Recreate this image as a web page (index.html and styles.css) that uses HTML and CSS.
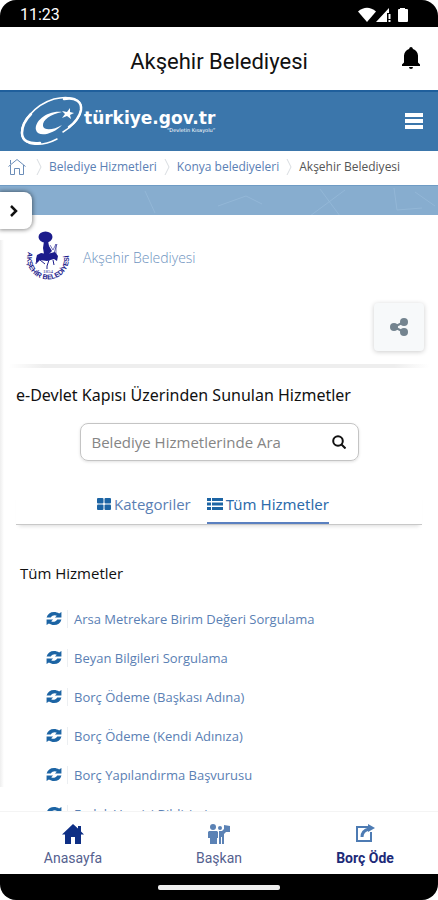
FILE: index.html
```html
<!DOCTYPE html>
<html lang="tr">
<head>
    <meta charset="UTF-8">
    <meta name="viewport" content="width=device-width, initial-scale=1.0">
    <title>Akşehir Belediyesi</title>
    <link rel="stylesheet" href="styles.css">
</head>
<body>
    <svg class="sprite" aria-hidden="true">
        <symbol id="sync" viewBox="0 0 16 14">
            <path d="M0 6C1 2 4 0 8 0c2 0 4 .6 5.500 1.600L16 0v6H9l2-2C9 2.800 6 3.500 4.500 6z"/>
            <path d="M16 8c-1 4-4 6-8 6-2 0-4-.6-5.500-1.600L0 14V8h7l-2 2c2 1.200 5 .5 6.500-2z"/>
        </symbol>
        <symbol id="sep" viewBox="0 0 6 18">
            <path d="M1 1l4 8-4 8" fill="none" stroke="#d9dde1"/>
        </symbol>
    </svg>

    <div class="phone">
        <div class="status">
            <span>11:23</span>
            <svg class="status-icons" width="52" height="16" viewBox="0 0 52 16">
                <path d="M0 4.500Q9-3 18 4.500L9 15z"/>
                <path d="M31 1v5h-2v9H18z"/>
                <path d="M30.500 7h2v5h-2zM30.500 13h2v2h-2z"/>
                <path d="M42 1h5v1h2q1 0 1 1v11q0 1-1 1h-8q-1 0-1-1V3q0-1 1-1h1z"/>
            </svg>
        </div>

        <header class="appbar">
            <h1>Akşehir Belediyesi</h1>
            <button class="bell" aria-label="Bildirimler">
                <svg width="18" height="22" viewBox="0 0 18 22">
                    <path d="M9 0q1.500 0 2 2 4.500 1.500 5 6.500v7l2 2V19H0v-1.500l2-2v-7Q2.500 3.500 7 2 7.500 0 9 0zM7 20h4q0 2-2 2t-2-2z"/>
                </svg>
            </button>
        </header>

        <main class="page">
            <div class="gov">
                <a class="gov-logo" href="#">
                    <svg width="64" height="50" viewBox="0 0 64 50">
                        <g fill="none" stroke="#fff" stroke-linecap="round">
                            <path d="M37 43C22 51 5 50 2 40C-1 28 14 9 34 3C50-1 63 3 61 14C60 22 52 31 43 36" stroke-width="1.500"/>
                            <path d="M20 47C9 48 2 45 2 37C2 30 6 23 11 18" stroke-width="2.500"/>
                            <path d="M44 3C56 1 62 6 61 14C60 20 55 27 49 31" stroke-width="2.500"/>
                        </g>
                        <path d="M42 16C28 14 14 25 16 34C18 42 34 38 42 29C34 34 24 35 23 30C22 24 31 18 42 16z" fill="#fff"/>
                        <path d="M50 12l0 4 4 1-4 2 1 4-4-3-5 2 3-4-3-3 5 1z" fill="#fff"/>
                    </svg>
                    <span class="gov-name">
                        <b>türkiye.gov.tr</b>
                        <small>“Devletin Kısayolu”</small>
                    </span>
                </a>
                <button class="menu" aria-label="Menü"><i></i><i></i><i></i></button>
            </div>

            <nav class="crumbs" aria-label="Konum">
                <a href="#" aria-label="Ana sayfa">
                    <svg width="18" height="18" viewBox="0 0 18 18" fill="none" stroke="#6b8db8">
                        <path d="M.5 8.500L9 1.500l8.500 7M2.500 7v9.500h4v-6h5v6h4V7M2.500 6V2"/>
                    </svg>
                </a>
                <svg class="sep"><use href="#sep"/></svg>
                <a href="#">Belediye Hizmetleri</a>
                <svg class="sep"><use href="#sep"/></svg>
                <a href="#">Konya belediyeleri</a>
                <svg class="sep"><use href="#sep"/></svg>
                <span>Akşehir Belediyesi</span>
            </nav>

            <div class="banner">
                <svg width="100%" height="30" viewBox="0 0 438 30" preserveAspectRatio="none" fill="none" stroke="#93b7d7">
                    <path d="M145 5l10 22M218 20l28-10 16 8M310 30l35-26M320 3l20 27M394 2l3 22 25-2M415 6l20 14"/>
                </svg>
            </div>
            <button class="drawer" aria-label="Paneli aç">
                <svg width="10" height="14" viewBox="0 0 10 14" fill="none" stroke="#111" stroke-width="2.500">
                    <path d="M2 2l5 5-5 5"/>
                </svg>
            </button>
            <div class="edge"></div>

            <section class="institution">
                <div class="inst-head">
                    <svg width="44" height="52" viewBox="0 0 44 52">
                        <g fill="#1c1c8c">
                            <ellipse cx="19.500" cy="6" rx="7" ry="5.500"/>
                            <path d="M18 10h4l1 5 3 5-3 3h-5l-1-6z"/>
                            <path d="M11 24l4-2 6 1 8-2 3 4-1 5-3-2-7 2-7-1-3 3-1-4z"/>
                        </g>
                        <g fill="none" stroke="#1c1c8c">
                            <path d="M11 28l-1 5M14 29l5 4M27 29l1 5M23 29l-2 6v3"/>
                            <path d="M24 14l3 5 3-6M30 13v11M31 13l-4 12" stroke-opacity=".6"/>
                        </g>
                        <path id="ring" d="M2 21A21 21 0 1 0 42 21" fill="none"/>
                        <text class="ring-text"><textPath href="#ring">AKŞEHİR BELEDİYESİ</textPath></text>
                        <text class="ring-year" x="17" y="42">1854</text>
                    </svg>
                    <a href="#">Akşehir Belediyesi</a>
                </div>
                <button class="share" aria-label="Paylaş">
                    <svg width="20" height="20" viewBox="0 0 20 20" fill="#74848f">
                        <path d="M5 10l10-5M5 10l10 5" stroke="#74848f" stroke-width="2"/>
                        <circle cx="5" cy="10" r="4"/>
                        <circle cx="15" cy="5" r="4"/>
                        <circle cx="15" cy="15" r="4"/>
                    </svg>
                </button>
            </section>

            <section class="services">
                <h2>e-Devlet Kapısı Üzerinden Sunulan Hizmetler</h2>
                <form class="search">
                    <input type="search" placeholder="Belediye Hizmetlerinde Ara" aria-label="Belediye Hizmetlerinde Ara">
                    <button type="button" aria-label="Ara">
                        <svg width="14" height="14" viewBox="0 0 14 14" fill="none" stroke="#111" stroke-width="2">
                            <circle cx="6" cy="6" r="4.800"/>
                            <path d="M9.500 9.500l4 4"/>
                        </svg>
                    </button>
                </form>

                <div class="tabs">
                    <a href="#">
                        <svg width="14" height="12" viewBox="0 0 14 12" fill="#1c64a4">
                            <rect width="6.500" height="5.500" rx="1"/>
                            <rect x="7.500" width="6.500" height="5.500" rx="1"/>
                            <rect y="6.500" width="6.500" height="5.500" rx="1"/>
                            <rect x="7.500" y="6.500" width="6.500" height="5.500" rx="1"/>
                        </svg>
                        Kategoriler
                    </a>
                    <a href="#" class="active">
                        <svg width="16" height="12" viewBox="0 0 16 12" fill="#1c64a4">
                            <path d="M0 0h4v3H0zM5 0h11v3H5zM0 4.500h4v3H0zM5 4.500h11v3H5zM0 9h4v3H0zM5 9h11v3H5z"/>
                        </svg>
                        Tüm Hizmetler
                    </a>
                </div>

                <h3>Tüm Hizmetler</h3>
                <ul class="list">
                    <li><svg><use href="#sync"/></svg><a href="#">Arsa Metrekare Birim Değeri Sorgulama</a></li>
                    <li><svg><use href="#sync"/></svg><a href="#">Beyan Bilgileri Sorgulama</a></li>
                    <li><svg><use href="#sync"/></svg><a href="#">Borç Ödeme (Başkası Adına)</a></li>
                    <li><svg><use href="#sync"/></svg><a href="#">Borç Ödeme (Kendi Adınıza)</a></li>
                    <li><svg><use href="#sync"/></svg><a href="#">Borç Yapılandırma Başvurusu</a></li>
                    <li><svg><use href="#sync"/></svg><a href="#">Emlak Vergisi Bildirimi</a></li>
                </ul>
            </section>
        </main>

        <nav class="bottom" aria-label="Alt menü">
            <a href="#">
                <svg width="22" height="20" viewBox="0 0 22 20" fill="#0e2f85">
                    <path d="M11 0l5 4.500V2h3v5.500l3 3h-3V20h-6v-7H9v7H3v-9.500H0z"/>
                </svg>
                Anasayfa
            </a>
            <a href="#">
                <svg width="22" height="20" viewBox="0 0 22 20" fill="#5b82b5">
                    <circle cx="5" cy="3" r="3"/>
                    <path d="M1 7h8l1 1v6H9v6H2v-6H0V8z"/>
                    <circle cx="12" cy="4" r="2"/>
                    <path d="M11 7h3l2-2V1l6 1v6h-4l-2 2v10h-2v-7h-1v7h-2z"/>
                </svg>
                Başkan
            </a>
            <a href="#" class="strong">
                <svg width="20" height="20" viewBox="0 0 20 20" fill="none" stroke="#4d7bb3" stroke-width="2">
                    <path d="M13 3H2v14h14V8"/>
                    <path d="M7 13c0-5 3-7 7-8" stroke-width="3"/>
                    <path d="M13 0v8l7-4z" fill="#4d7bb3" stroke="none"/>
                </svg>
                Borç Öde
            </a>
        </nav>

        <div class="gesture"><i></i></div>
    </div>
</body>
</html>
```

FILE: styles.css
```css
* {
    box-sizing: border-box;
}

body {
    margin: 0;
    background-color: #fff;
    font-family: 'Open Sans', 'Noto Sans', sans-serif;
    color: #111;
}

a {
    color: #5a80b4;
    text-decoration: none;
}

button {
    display: flex;
    align-items: center;
    justify-content: center;
    border: 0;
    padding: 0;
    background: none;
}

h1, h2, h3, ul {
    margin: 0;
    padding: 0;
    font-weight: 400;
}

svg {
    display: block;
    flex: none;
}

.sprite {
    position: absolute;
    width: 0;
    height: 0;
}

.phone {
    display: flex;
    flex-direction: column;
    height: 100vh;
}

/* status + app bar */

.status {
    display: flex;
    flex: none;
    justify-content: space-between;
    align-items: center;
    height: 27px;
    padding: 2px 28px 0 20px;
    border-radius: 16px 16px 0 0;
    background-color: #000;
    color: #fff;
    font-family: Roboto, sans-serif;
    font-size: 16px;
}

.status-icons {
    fill: #fff;
}

.appbar {
    display: grid;
    flex: none;
    grid-template-columns: 40px 1fr 40px;
    align-items: center;
    height: 63px;
    padding: 6px 7px 0;
    font-family: Roboto, sans-serif;
}

.appbar h1 {
    grid-column: 2;
    font-size: 22px;
    line-height: 28px;
    text-align: center;
}

.bell {
    height: 32px;
    padding-bottom: 8px;
}

/* e-devlet page */

.page {
    position: relative;
    flex: 1;
    min-height: 0;
    overflow: hidden;
}

.gov {
    display: flex;
    justify-content: space-between;
    align-items: center;
    height: 61px;
    padding: 0 15px 2px 20px;
    border-top: 2px solid #1f5f9c;
    background-color: #3b76ab;
}

.gov-logo {
    display: flex;
    align-items: center;
    color: #fff;
}

.gov-name {
    display: flex;
    flex-direction: column;
    font-family: 'DejaVu Sans', sans-serif;
}

.gov-name b {
    font-size: 17px;
    line-height: 18px;
}

.gov-name small {
    align-self: flex-end;
    font-size: 5px;
    line-height: 6px;
}

.menu {
    flex-direction: column;
    gap: 2px;
}

.menu i {
    width: 18px;
    height: 4px;
    background-color: #fff;
}

.crumbs {
    display: flex;
    align-items: center;
    gap: 7px;
    height: 34px;
    padding: 0 8px 2px;
    font-size: 12px;
    line-height: 16px;
    white-space: nowrap;
    color: #555;
}

.sep {
    width: 6px;
    height: 18px;
}

.crumbs a:first-child {
    margin-right: 3px;
}

.banner {
    height: 30px;
    border-top: 1px solid #6f9bc4;
    background-color: #87adcf;
    overflow: hidden;
}

.drawer {
    position: absolute;
    top: 102px;
    left: 0;
    width: 32px;
    height: 37px;
    padding-right: 4px;
    border-radius: 0 8px 8px 0;
    background-color: #fff;
    box-shadow: 0 0 4px 1px rgba(0, 0, 0, .45);
}

.edge {
    position: absolute;
    top: 150px;
    bottom: 24px;
    left: 0;
    width: 4px;
    background: linear-gradient(to right, #eee, #fff);
}

.institution {
    display: flex;
    flex-direction: column;
    justify-content: space-between;
    height: 153px;
    padding: 16px 14px 17px 26px;
    background: linear-gradient(to right, #fff 2%, #eee 10%, #eee 90%, #fff 98%) bottom / 100% 4px no-repeat;
}

.inst-head {
    display: flex;
    align-items: center;
    gap: 13px;
    font-size: 14px;
    font-weight: 300;
}

.inst-head a {
    color: #6e93c0;
}

.ring-text {
    font: bold 7px 'Liberation Sans', sans-serif;
    fill: #1c1c8c;
}

.ring-year {
    font: 5px 'Liberation Serif', serif;
    fill: #1c1c8c;
}

.share {
    align-self: flex-end;
    width: 50px;
    height: 48px;
    border-radius: 4px;
    background-color: #f7f9fa;
    box-shadow: 0 1px 5px rgba(0, 0, 0, .2);
}

.services {
    padding: 15px 16px 0;
}

.services h2 {
    font-family: 'Noto Sans', sans-serif;
    font-size: 16px;
    line-height: 24px;
}

.search {
    display: flex;
    align-items: center;
    width: 279px;
    height: 38px;
    margin: 16px auto 0;
    padding: 0 12px 0 11px;
    border: 1px solid #c4c4c4;
    border-radius: 8px;
    box-shadow: 0 1px 3px rgba(0, 0, 0, .12);
}

.search input {
    flex: 1;
    min-width: 0;
    border: 0;
    padding: 0;
    outline: 0;
    background: none;
    font: 15px 'Open Sans', sans-serif;
}

.search input::placeholder {
    color: #858585;
}

.tabs {
    display: flex;
    justify-content: center;
    gap: 16px;
    margin-top: 32px;
    padding-right: 12px;
    border-bottom: 1px solid #c8c8c8;
    box-shadow: 0 4px 4px -3px rgba(0, 0, 0, .15);
    font-size: 15px;
    line-height: 22px;
}

.tabs a {
    display: flex;
    align-items: center;
    gap: 3px;
    padding-bottom: 7px;
    border-bottom: 2px solid transparent;
}

.tabs .active {
    border-color: #5a80c0;
    color: #2e6cab;
    font-family: 'Noto Sans', sans-serif;
}

.services h3 {
    margin: 36px 0 0 4px;
    font-size: 15px;
    line-height: 24px;
}

.list {
    margin: 14px 0 0 30px;
    list-style: none;
}

.list li {
    display: flex;
    align-items: center;
    height: 39px;
    font-size: 13px;
}

.list svg {
    width: 16px;
    height: 13px;
    fill: #1c64a4;
}

.list a {
    margin-left: 5px;
    padding-left: 6px;
    border-left: 1px solid #eceff2;
}

/* bottom navigation */

.bottom {
    display: grid;
    flex: none;
    grid-template-columns: repeat(3, 1fr);
    height: 63px;
    padding-top: 12px;
    border-top: 1px solid #f4f4f4;
    font: 14px/18px Roboto, sans-serif;
}

.bottom a {
    display: flex;
    flex-direction: column;
    align-items: center;
    gap: 5px;
    color: #55618f;
}

.bottom .strong {
    font-weight: 700;
    color: #1d2a78;
}

.gesture {
    display: flex;
    flex: none;
    justify-content: center;
    align-items: center;
    height: 26px;
    border-radius: 0 0 16px 16px;
    background-color: #000;
}

.gesture i {
    width: 122px;
    height: 5px;
    border-radius: 2px;
    background-color: #eee;
}
```
